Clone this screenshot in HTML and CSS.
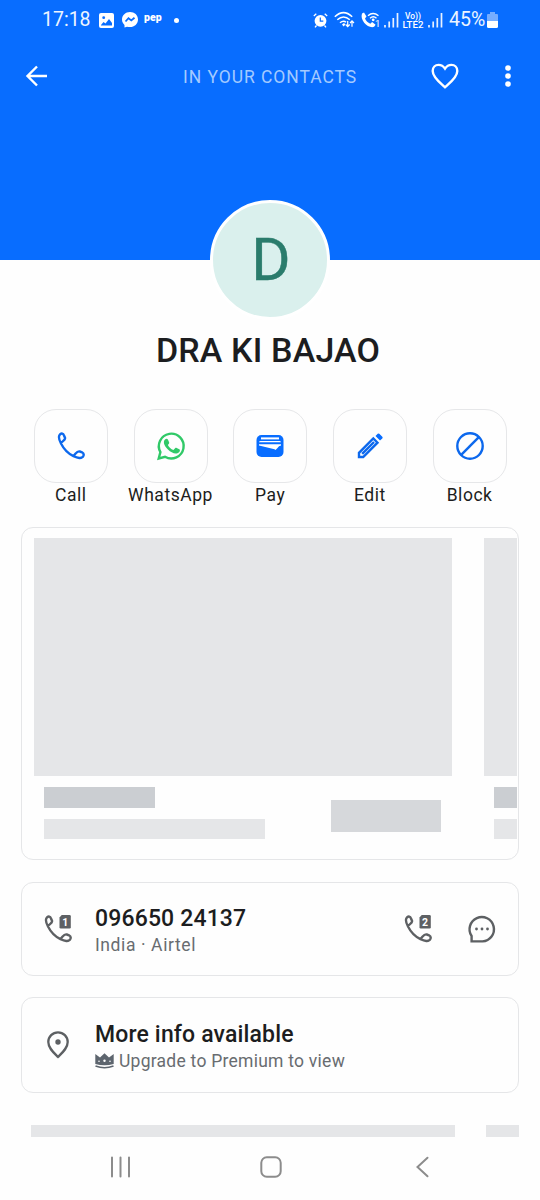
FILE: index.html
```html
<!DOCTYPE html>
<html lang="en">
<head>
<meta charset="utf-8">
<title>Contact details</title>
<link rel="stylesheet" href="styles.css">
</head>
<body>
<svg class="symbols" aria-hidden="true">
  <symbol id="phone" viewBox="0 0 28 28"><path d="M4 10.800C5.800 9 8.800 7.800 8 5.800L6.900 3.200C6.200 1.400 4.600 1.100 3.200 2.200C1 4 1.900 7.500 4 11.500C6.500 16.500 11 21.500 16.500 24.200C20 25.800 25 27.500 26.500 23.600C27.100 21.900 26.300 21 25 20.300L22.800 19.500C20.200 18.500 19 21.500 16.500 23.800"/></symbol>
  <symbol id="signal" viewBox="0 0 15 15"><path d="M1 12v2.500M5.200 8.500v6M9.300 5v9.500M13.500 0v14.500"/></symbol>
</svg>
<div class="screen">
  <header class="hero">
    <div class="status">
      <div class="status-left">
        <span class="clock">17:18</span>
        <svg class="photo" viewBox="0 0 15 15"><rect width="15" height="15" rx="2" fill="#fff"/><circle cx="4.700" cy="4.700" r="1.400" fill="#086dff"/><path d="M2 12l2.500-3 2 1.500L10 6l3 4v2.500H2z" fill="#086dff"/></svg>
        <svg class="messenger" viewBox="0 0 16 16"><path d="M8 0C3.500 0 0 3.200 0 7.500c0 2.300 1 4.100 2.500 5.500v2.500L5 14.700c1 .3 2 .4 3 .4 4.500 0 8-3.200 8-7.600S12.500 0 8 0z" fill="#fff"/><path d="M3.500 9.500l3-3.300 2.800 2.200 3.200-2.700" fill="none" stroke="#086dff" stroke-width="1.800"/></svg>
        <span class="pep">pep</span>
        <i class="dot"></i>
      </div>
      <div class="status-right">
        <svg class="alarm" viewBox="0 0 15 15"><circle cx="7.500" cy="7.800" r="5.900" fill="#fff"/><path d="M.8 3L3.300.8M14.200 3L11.700.8M3.500 12.500L2 14.400M11.500 12.500l1.500 1.900" stroke="#fff" stroke-width="1.300"/><path d="M7.300 4.500v3.700h3" fill="none" stroke="#086dff" stroke-width="1.200"/></svg>
        <svg class="wifi" viewBox="0 0 21 16"><path d="M.8 4.700Q9.500-3.400 18.200 4.700M3.300 7.800Q9.500 2.200 15.800 7.800M6 10.800q3.500-3 6-.5" fill="none" stroke="#fff" stroke-width="1.500"/><path d="M8 12.500l2-1.500 1.500 1.500-2 2z" fill="#fff"/><path d="M13.700 9v5.500m-2-2l2 2.100 2-2.100M18 14.800V9m-2 2l2-2.100L20 11" fill="none" stroke="#fff" stroke-width="1.200"/></svg>
        <svg class="wcall" viewBox="0 0 19 16"><path d="M1 1.500l2-1 2.500 4L4 6.500c1 2.500 3 4.300 5.300 5.200l1.800-1.600 3.500 2.700-1.500 2C7.500 17-1.500 8.500 1 1.500z" fill="#fff"/><path d="M7 3.800q5-4.500 10.500 0M9 6.200q3.300-2.800 6.500 0" fill="none" stroke="#fff" stroke-width="1.400"/><circle cx="12.200" cy="7.800" r="1.400" fill="#fff"/><text x="14" y="15.200" font-size="9.500" fill="#fff">1</text></svg>
        <svg class="bars"><use href="#signal"/></svg>
        <svg class="volte" viewBox="0 0 22 17"><text x="3" y="7.300" textLength="10" lengthAdjust="spacingAndGlyphs">Vo</text><text x="13" y="6.800" textLength="6" lengthAdjust="spacingAndGlyphs">))</text><text x=".5" y="16" textLength="21" lengthAdjust="spacingAndGlyphs">LTE2</text></svg>
        <svg class="bars"><use href="#signal"/></svg>
        <span class="percent">45%</span>
        <svg class="battery" viewBox="0 0 11 16"><path d="M3 0h5v2h2q1 0 1 1v6H0V3q0-1 1-1h2z" fill="#76adff"/><path d="M0 9h11v5.500q0 1.500-1.500 1.500h-8Q0 16 0 14.500z" fill="#fff"/></svg>
      </div>
    </div>
    <nav class="toolbar">
      <svg class="back" viewBox="0 0 22 22"><path d="M21 11H1.800M11 1.500L1.500 11l9.500 9.500"/></svg>
      <span class="caption">IN YOUR CONTACTS</span>
      <svg class="heart" viewBox="0 0 28 26"><path d="M14 24.200C10 20.300 1.700 14.500 1.700 7.900c0-3.500 2.600-6 5.800-6 2.700 0 4.900 1.300 6.500 3.700 1.600-2.400 3.800-3.700 6.500-3.700 3.200 0 5.800 2.500 5.800 6 0 6.600-8.300 12.400-12.300 16.300z"/></svg>
      <svg class="more" viewBox="0 0 6 22"><circle cx="3" cy="3" r="2.800"/><circle cx="3" cy="11" r="2.800"/><circle cx="3" cy="19" r="2.800"/></svg>
    </nav>
  </header>
  <div class="avatar">D</div>
  <h1 class="name">DRA KI BAJAO</h1>
  <div class="actions">
    <div class="action"><div class="tile"><svg class="icon"><use href="#phone"/></svg></div><span>Call</span></div>
    <div class="action"><div class="tile"><svg class="icon green" viewBox="0 0 28 28"><path d="M1.700 26.500l1.700-6.400A12.400 12.400 0 1 1 8 24.800z"/><path class="solid" d="M8 7.500c1.200-1.200 2.500-.9 3 .3l1.200 2.800c.2.700-.5 1.600-1.300 2.400 1.300 2.400 3 3.900 5.500 5.100l1.700-1.900c.5-.5 1-.5 1.600-.2l2.600 1.300c1 .5.700 2-.2 2.900-3 3-7.900.5-10.900-2.400C8 14.800 5.300 10.300 8 7.500z"/></svg></div><span>WhatsApp</span></div>
    <div class="action"><div class="tile"><svg class="icon" viewBox="0 0 28 28"><rect class="fill" x=".5" y="3" width="27" height="22" rx="5"/><path d="M5 6.400h18" stroke="#fff" stroke-width="2"/><path d="M3 10.300q.2-1.300 1.500-1.300h19q1.300 0 1.500 1.300z" fill="#fff" stroke="none"/><path d="M3 12.300h22v1.200q-2.200 0-3.500 2.600L19.500 18l-1-.8L3 13.600z" fill="#fff" stroke="none"/></svg></div><span>Pay</span></div>
    <div class="action"><div class="tile"><svg class="icon" viewBox="0 0 28 28"><path class="pencil" d="M3 25v-4.200L17.300 6.500l4.200 4.200L7.200 25zM6.200 21.800L18 10"/><path class="fill" d="M19.500 4l2.200-2.200q.8-.8 1.600 0l3 3q.8.8 0 1.600L24 8.600z"/></svg></div><span>Edit</span></div>
    <div class="action"><div class="tile"><svg class="icon" viewBox="0 0 28 28"><circle cx="14" cy="14" r="12.700"/><path d="M5.200 22.800L22.800 5.200"/></svg></div><span>Block</span></div>
  </div>

  <section class="card loading">
    <div class="ghost">
      <div class="ghost-image"></div>
      <div class="ghost-row">
        <div class="ghost-lines"><i class="line dark"></i><i class="line"></i></div>
        <i class="ghost-button"></i>
      </div>
    </div>
    <div class="ghost">
      <div class="ghost-image"></div>
      <div class="ghost-row"><div class="ghost-lines"><i class="line dark"></i><i class="line"></i></div></div>
    </div>
  </section>

  <section class="card number">
    <svg class="sim" viewBox="0 0 28 28"><use href="#phone" width="28" height="28"/><path class="chip" d="M17.700 0H25.500q1.300 0 1.300 1.300v10.900q0 1.300-1.300 1.300h-8.700q-1.300 0-1.300-1.300V2.500z"/><text x="18.200" y="10.700">1</text></svg>
    <div class="info"><div class="title">096650 24137</div><div class="sub carrier">India · Airtel</div></div>
    <svg class="sim second" viewBox="0 0 28 28"><use href="#phone" width="28" height="28"/><path class="chip" d="M17.700 0H25.500q1.300 0 1.300 1.300v10.900q0 1.300-1.300 1.300h-8.700q-1.300 0-1.300-1.300V2.500z"/><text x="18.100" y="10.700">2</text></svg>
    <svg class="chat" viewBox="0 0 28 28"><path d="M3.600 26.400V21A12.200 12.200 0 1 1 14.500 26.400z"/><g class="dots"><circle cx="8.500" cy="14" r="1.400"/><circle cx="14" cy="14" r="1.400"/><circle cx="19.500" cy="14" r="1.400"/></g></svg>
  </section>

  <section class="card premium">
    <svg class="pin" viewBox="0 0 22 28"><path d="M11 25.900C6.500 21.500 1.300 17 1.300 11A9.700 9.700 0 0 1 20.700 11C20.700 17 15.500 21.500 11 25.900z"/><circle cx="11" cy="11" r="2.700"/></svg>
    <div class="info"><div class="title">More info available</div><div class="sub"><svg class="crown" viewBox="0 0 19 16"><path d="M.3 1L5 4.500 9.500.3 14 4.500 18.700 1v10Q9.500 13.500.3 11z" fill="#5d656e"/><path d="M.5 13Q9.500 16.500 18.500 13" fill="none" stroke="#5d656e" stroke-width="1.500"/><g fill="#fff"><circle cx="4" cy="8.300" r=".8"/><circle cx="9.500" cy="7.800" r="1.200"/><circle cx="15" cy="8.300" r=".8"/></g></svg><span>Upgrade to Premium to view</span></div></div>
  </section>

  <div class="strip"><i></i><i></i></div>
  <footer class="navbar">
    <svg class="navkey" viewBox="0 0 22 22"><path d="M2 1.500v19M10.500 1.500v19M19 1.500v19"/></svg>
    <svg class="navkey" viewBox="0 0 22 22"><rect x="1.300" y="1.300" width="19.400" height="19.400" rx="5.500"/></svg>
    <svg class="navkey" viewBox="0 0 22 22"><path d="M16.500 1.800L6.500 11l10 9.300"/></svg>
  </footer>
</div>
</body>
</html>
```
FILE: styles.css
```css
* { box-sizing: border-box; }
body { margin: 0; background: #fff; font-family: Roboto, sans-serif; color: #1c1d20; }
svg { display: block; flex: none; overflow: visible; }
.symbols { position: absolute; width: 0; height: 0; }
.screen { width: 540px; height: 1200px; overflow: hidden; background: #fefefe; display: flex; flex-direction: column; }

.hero { height: 260px; flex: none; background: #086dff; color: #fff; }
.status { height: 40px; padding: 0 42px 0 42px; display: flex; justify-content: space-between; align-items: center; }
.status-left, .status-right { display: flex; align-items: center; }
.clock { width: 57px; font-size: 19.5px; line-height: 40px; color: #edf5ff; }
.photo { width: 15px; height: 15px; }
.messenger { width: 16px; height: 16px; margin-left: 8px; }
.pep { width: 18px; margin: -4px 0 0 6px; font-size: 10.5px; font-weight: 900; line-height: 16px; }
.dot { width: 5px; height: 5px; margin-left: 12px; border-radius: 50%; background: #fff; }
.alarm { width: 15px; height: 15px; }
.wifi { width: 21px; height: 16px; margin-left: 6px; }
.wcall { width: 19px; height: 16px; margin-left: 6px; }
.bars { width: 15px; height: 15px; margin-left: 4px; stroke: #e8f1ff; stroke-width: 1.7; }
.volte { width: 22px; height: 17px; margin-left: 3px; fill: #fff; font-size: 9px; font-weight: 500; }
.percent { width: 37px; margin-left: 6px; font-size: 19.5px; line-height: 40px; color: #edf5ff; }
.battery { width: 11px; height: 16px; margin-left: 1px; }

.toolbar { height: 72px; display: grid; grid-template-columns: 156px 1fr 28px 46px 6px; align-items: center; padding: 0 29px 0 26px; }
.back { width: 22px; height: 22px; fill: none; stroke: #fff; stroke-width: 2.4; }
.caption { padding: 2px 0 0 1px; font-size: 17.5px; letter-spacing: .95px; line-height: 24px; color: #a3caff; white-space: nowrap; }
.heart { width: 28px; height: 26px; fill: none; stroke: #fff; stroke-width: 2.4; }
.more { grid-column: 5; width: 6px; height: 22px; fill: #fff; }

.avatar { flex: none; width: 120px; height: 120px; margin: -60px auto 0; border: 3px solid #fff; border-radius: 50%; background: #daf0ed; color: #2a7c6c; font-size: 60px; line-height: 114px; padding-left: 2px; text-align: center; -webkit-text-stroke: .4px #2a7c6c; }
.name { margin: 9px 0 0 -4px; height: 42px; font-size: 34px; line-height: 42px; letter-spacing: .15px; font-weight: 500; text-align: center; }

.actions { height: 100px; flex: none; margin-top: 38px; padding: 0 21px; display: grid; grid-template-columns: repeat(5, 99.7px); }
.action { display: flex; flex-direction: column; align-items: center; font-size: 17.5px; line-height: 24px; letter-spacing: .55px; }
.tile { width: 74px; height: 74px; border: 1.5px solid #e6e7e9; border-radius: 22px; display: grid; place-items: center; }
.icon { width: 28px; height: 28px; fill: none; stroke: #0c68ed; stroke-width: 2.4; }
.icon.green { stroke: #31c968; }
.icon .solid { fill: #31c968; stroke: none; }
.icon .fill { fill: #086dff; stroke: none; }
.pencil { stroke-width: 2.4; }

.card { flex: none; width: 498px; margin: 21px 0 0 21px; border: 1.5px solid #e5e6e8; border-radius: 12px; }
.loading { height: 333px; margin-top: 18px; padding: 10px 1px 0 12px; display: flex; gap: 31.5px; overflow: hidden; }
.loading .ghost + .ghost { width: 33px; overflow: hidden; }
.ghost { flex: none; width: 418px; }
.ghost-image { height: 238px; background: #e5e6e8; }
.ghost-row { padding: 11px 11px 0 10px; display: flex; justify-content: space-between; align-items: flex-start; }
.ghost-lines { display: grid; gap: 11px; }
.line { display: block; width: 221px; height: 20.5px; background: #e5e6e8; }
.line.dark { width: 111px; background: #cbced2; }
.ghost-button { width: 110px; height: 32px; margin-top: 13px; background: #d6d8db; }

.number, .premium { display: flex; align-items: center; padding: 0 22px; }
.number { height: 94px; margin-top: 22px; }
.premium { height: 96px; }
.sim, .chat { width: 28px; height: 28px; fill: none; stroke: #5d6063; stroke-width: 2.4; }
.sim .chip { fill: #5d6063; stroke: none; }
.sim text { fill: #fff; stroke: none; font-size: 10.5px; font-weight: 700; }
.second { margin-right: 36px; }
.chat .dots { fill: #5d6063; stroke: none; }
.info { flex: 1; margin-left: 23px; padding-top: 5px; }
.title { font-size: 23px; line-height: 27px; font-weight: 500; letter-spacing: .15px; }
.sub { display: flex; align-items: center; font-size: 17.5px; line-height: 26px; letter-spacing: .25px; color: #686c70; }
.carrier { letter-spacing: .6px; }
.pin { width: 22px; height: 28px; margin: 0 3px; fill: none; stroke: #5d6063; stroke-width: 2.3; }
.pin circle { fill: #5d6063; stroke: none; }
.crown { width: 19px; height: 16px; margin-right: 5px; }

.strip { height: 12px; flex: none; margin: 32px 21px 0 31px; display: flex; gap: 31px; }
.strip i { width: 424px; background: #e5e6e8; }
.strip i + i { width: 33px; }
.navbar { height: 60px; padding: 0 107px 0 109.5px; display: flex; justify-content: space-between; align-items: center; }
.navkey { width: 22px; height: 22px; fill: none; stroke: #8c8c8c; stroke-width: 2; stroke-linecap: round; }
```
